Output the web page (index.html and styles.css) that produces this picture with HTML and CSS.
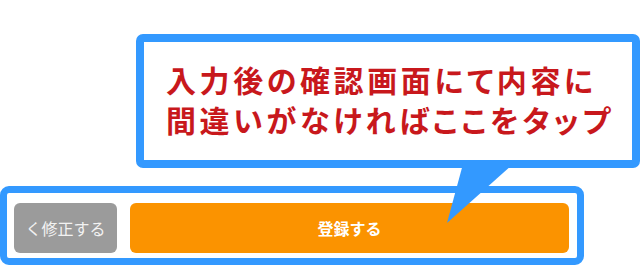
FILE: index.html
```html
<!DOCTYPE html>
<html lang="ja">
<head>
<meta charset="utf-8">
<link rel="stylesheet" href="styles.css">
</head>
<body>
<div class="scene">
  <div class="bubble">
    <p class="msg">入力後の確認画面にて内容に<br>間違いがなければここをタップ</p>
  </div>
  <svg class="tail" width="80" height="70" viewBox="0 0 80 70"><polygon points="23,0 73,0 7,59" fill="#3399ff"/></svg>
  <div class="frame">
    <button class="btn back">く修正する</button>
    <button class="btn submit">登録する</button>
  </div>
</div>
</body>
</html>
```
FILE: styles.css
```css
html, body { margin: 0; padding: 0; background: #fff; }
body { font-family: "Noto Sans CJK JP", "Noto Sans", sans-serif; }
.scene { position: relative; width: 640px; height: 266px; overflow: hidden; }
.bubble {
  margin: 34px 0 0 136px;
  width: 504px; height: 134px;
  box-sizing: border-box;
  border: 8px solid #3399ff;
  border-radius: 7px;
  background: #fff;
  display: flex; align-items: center;
  padding-left: 22px;
}
.msg {
  margin: 0;
  color: #c8181c;
  font-weight: 700;
  font-size: 30px;
  line-height: 40px;
  letter-spacing: 3.6px;
  font-feature-settings: "palt";
  position: relative; top: -2px;
}
.tail { position: absolute; left: 440px; top: 164px; }
.frame {
  margin-top: 18px;
  width: 584px; height: 79px;
  box-sizing: border-box;
  border: 7px solid #3399ff;
  border-radius: 9px;
  padding: 10px 8px 5px 7px;
  display: flex; gap: 13px;
}
.btn {
  border: 0; margin: 0; padding: 0;
  height: 50px; border-radius: 6px;
  font-family: inherit; font-size: 16px;
  color: #fff;
}
.back { width: 103px; background: #9b9b9b; color: #f2f2f2; font-weight: 400; }
.submit { flex: 1; background: #fb9300; font-weight: 700; }
```
